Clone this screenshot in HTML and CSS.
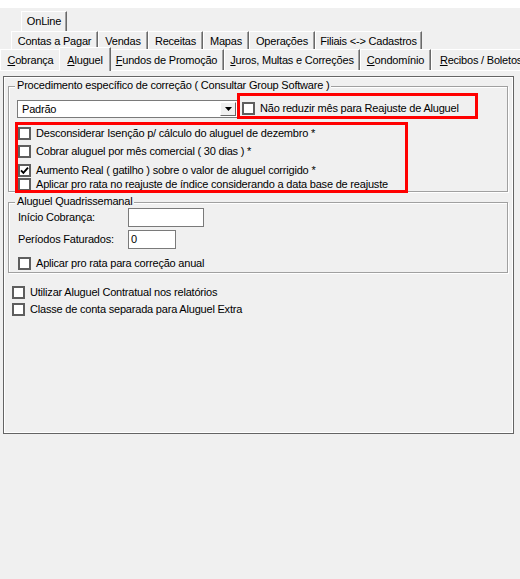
FILE: index.html
```html
<!DOCTYPE html>
<html lang="pt-BR">
<head>
<meta charset="utf-8">
<title>Aluguel</title>
<link rel="stylesheet" href="styles.css">
</head>
<body>
<div class="caption"></div>
<div class="tabs">
  <div class="tab-row row1">
    <div class="tab w-online">OnLine</div>
  </div>
  <div class="tab-row row2">
    <div class="tab w-contas">Contas a Pagar</div>
    <div class="tab w-vendas">Vendas</div>
    <div class="tab w-receitas">Receitas</div>
    <div class="tab w-mapas">Mapas</div>
    <div class="tab w-operacoes">Operações</div>
    <div class="tab w-filiais">Filiais &lt;-&gt; Cadastros</div>
  </div>
  <div class="tab-row row3">
    <div class="tab w-cobranca"><u>C</u>obrança</div>
    <div class="tab active w-aluguel"><u>A</u>luguel</div>
    <div class="tab w-fundos"><u>F</u>undos de Promoção</div>
    <div class="tab w-juros"><u>J</u>uros, Multas e Correções</div>
    <div class="tab w-condominio"><u>C</u>ondomínio</div>
    <div class="tab w-recibos"><u>R</u>ecibos / Boletos</div>
  </div>
</div>
<div class="sheet">
  <div class="panel">
    <div class="group g1">
      <div class="group-title">Procedimento específico de correção ( Consultar Group Software )</div>
      <div class="combo-row">
        <div class="combo">
          <span class="combo-text">Padrão</span>
          <span class="combo-btn"><svg width="7" height="4" viewBox="0 0 7 4"><polygon points="0,0 7,0 3.5,4" fill="#000"/></svg></span>
        </div>
        <div class="hl hl-single">
          <div class="check"><span class="box"></span><span>Não reduzir mês para Reajuste de Aluguel</span></div>
        </div>
      </div>
      <div class="hl hl-list">
        <div class="check"><span class="box"></span><span>Desconsiderar Isenção p/ cálculo do aluguel de dezembro *</span></div>
        <div class="check"><span class="box"></span><span>Cobrar aluguel por mês comercial ( 30 dias ) *</span></div>
        <div class="check"><span class="box"><svg width="9" height="9" viewBox="0 0 9 9"><path d="M1 4.3 L3.4 6.8 L8 1.6" fill="none" stroke="#000" stroke-width="1.9"/></svg></span><span>Aumento Real ( gatilho ) sobre o valor de aluguel corrigido *</span></div>
        <div class="check"><span class="box"></span><span>Aplicar pro rata no reajuste de índice considerando a data base de reajuste</span></div>
      </div>
    </div>
    <div class="group g2">
      <div class="group-title">Aluguel Quadrissemanal</div>
      <div class="field-row"><span class="field-label">Início Cobrança:</span><span class="edit w-inicio"></span></div>
      <div class="field-row"><span class="field-label">Períodos Faturados:</span><span class="edit w-periodos">0</span></div>
      <div class="check"><span class="box"></span><span>Aplicar pro rata para correção anual</span></div>
    </div>
    <div class="check loose first"><span class="box"></span><span>Utilizar Aluguel Contratual nos relatórios</span></div>
    <div class="check loose"><span class="box"></span><span>Classe de conta separada para Aluguel Extra</span></div>
  </div>
</div>
</body>
</html>
```
FILE: styles.css
```css
html, body {
  margin: 0;
  background: #f0f0f0;
}
body {
  width: 520px;
  height: 579px;
  overflow: hidden;
  font-family: "Liberation Sans", Arial, sans-serif;
  font-size: 11px;
  line-height: 13px;
  letter-spacing: -0.2px;
  color: #000;
}

.caption {
  height: 8px;
  background: #fff;
}

/* tab strip */
.tabs {
  height: 62px;
  padding-top: 3px;
  box-sizing: border-box;
}
.tab-row {
  display: flex;
}
.row1 { height: 20px; margin-left: 21px; }
.row2 { height: 18px; margin-left: 11px; }
.row3 { height: 21px; }

.tab {
  box-sizing: border-box;
  height: 100%;
  border-left: 1px solid #fff;
  border-top: 1px solid #fff;
  border-right: 1px solid #696969;
  box-shadow: inset -1px 0 0 #a0a0a0;
  text-align: center;
  white-space: nowrap;
  padding-top: 3px;
  flex: none;
}
.row3 .tab { padding-top: 4px; }
.row3 .tab.active {
  position: relative;
  z-index: 1;
  height: 24px;
  margin: -2px -2px -1px;
  padding-top: 6px;
  background: #f0f0f0;
}

.w-online { width: 46px; }
.w-contas { width: 87px; }
.w-vendas { width: 50px; }
.w-receitas { width: 55px; }
.w-mapas { width: 46px; }
.w-operacoes { width: 66px; }
.w-filiais { width: 107px; }
.w-cobranca { width: 61px; }
.w-aluguel { width: 52px; }
.w-fundos { width: 115px; }
.w-juros { width: 136px; }
.w-condominio { width: 71px; }
.w-recibos { width: 100px; }

/* sheet and panel */
.sheet {
  border-top: 1px solid #fff;
  padding: 5px 0 0 3px;
}
.panel {
  width: 511px;
  height: 358px;
  box-sizing: border-box;
  border: 1px solid #646464;
  box-shadow: inset 1px 1px 0 #fff, inset -1px -1px 0 #fff;
  padding: 0 5px 0 4px;
  display: flow-root;
}

/* etched group boxes */
.group {
  padding: 0 8px;
  border: 1px solid #a0a0a0;
  box-shadow: inset 1px 1px 0 #fff, 1px 1px 0 #fff;
}
.group-title {
  display: table;
  margin: -8px 0 0 -2px;
  padding: 0 2px;
  background: #f0f0f0;
  line-height: 13px;
  white-space: nowrap;
}
.g1 { margin-top: 9px; padding-bottom: 1px; }
.g2 { margin-top: 10px; padding-bottom: 2px; }

/* combo */
.combo-row {
  display: flex;
  align-items: flex-start;
  margin-top: 4px;
}
.combo {
  margin-top: 4px;
  width: 221px;
  height: 18px;
  box-sizing: border-box;
  border: 1px solid #7a7a7a;
  background: #fff;
  padding: 1px;
  display: flex;
  justify-content: space-between;
  flex: none;
}
.combo-text {
  padding-left: 3px;
  line-height: 14px;
}
.combo-btn {
  width: 16px;
  height: 14px;
  box-sizing: border-box;
  border: 1px solid;
  border-color: #fff #696969 #696969 #fff;
  background: #f0f0f0;
  display: flex;
  align-items: center;
  justify-content: center;
}

/* red annotation frames */
.hl {
  outline: 3px solid #f00;
}
.hl-single {
  margin-left: 2px;
  width: 235px;
  height: 20px;
  box-sizing: border-box;
  padding: 6px 0 0 2px;
  flex: none;
}
.hl-list {
  margin: 7px 0 0 1px;
  width: 387px;
  height: 65px;
  box-sizing: border-box;
  padding-top: 2px;
}
.hl-list .check:nth-child(2) { margin-top: 5px; }
.hl-list .check:nth-child(3) { margin-top: 6px; }
.hl-list .check:nth-child(4) { margin-top: 1px; }

/* checkboxes */
.check {
  display: flex;
  align-items: center;
  gap: 5px;
  height: 13px;
  white-space: nowrap;
}
.box {
  flex: none;
  width: 13px;
  height: 13px;
  box-sizing: border-box;
  border: 2px solid #5e5e5e;
  background: #fff;
  display: flex;
  align-items: center;
  justify-content: center;
}

/* group 2 */
.field-row {
  display: flex;
  align-items: center;
  margin-left: 1px;
}
.field-row + .field-row { margin-top: 3px; }
.field-label { width: 110px; }
.edit {
  height: 19px;
  box-sizing: border-box;
  border: 1px solid #7a7a7a;
  background: #fff;
  padding-left: 2px;
  line-height: 17px;
}
.w-inicio { width: 76px; }
.w-periodos { width: 48px; }
.g2 .check { margin: 8px 0 0 1px; }

.loose { margin-left: 4px; margin-top: 4px; }
.loose.first { margin-top: 13px; }
```
